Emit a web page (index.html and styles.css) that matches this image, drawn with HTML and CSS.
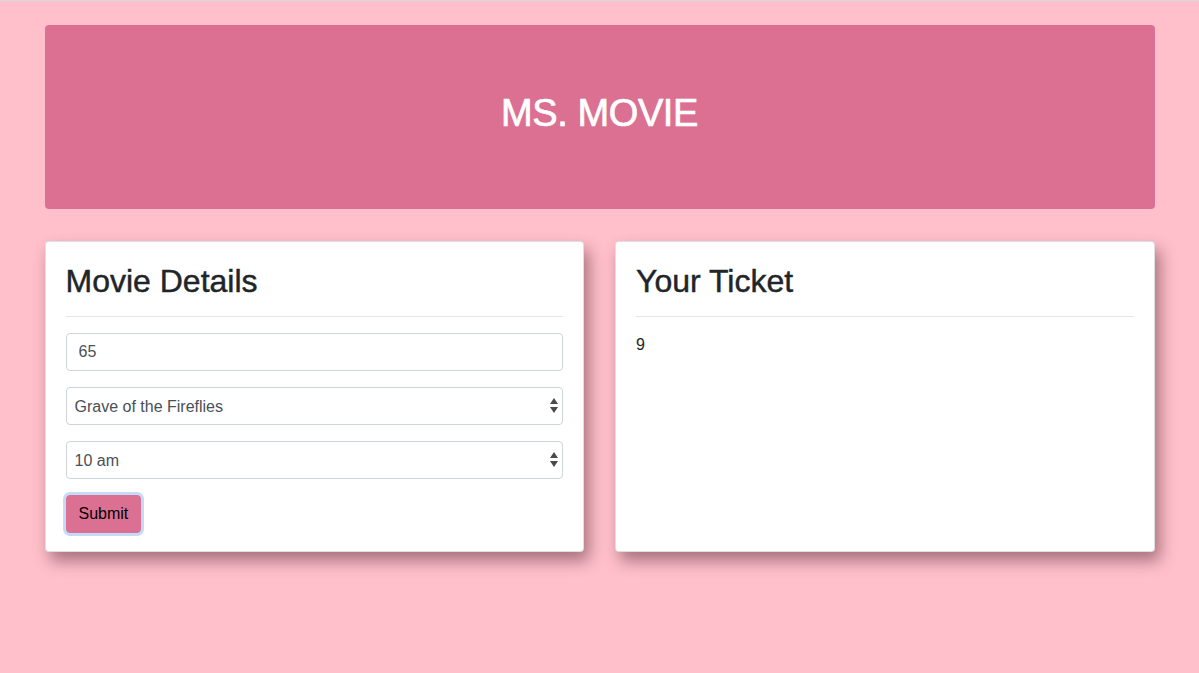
FILE: index.html
```html
<!DOCTYPE html>
<html lang="en">
<head>
<meta charset="utf-8">
<title>MS. MOVIE</title>
<link rel="stylesheet" href="styles.css">
</head>
<body>
<div class="container">
  <header class="jumbotron">
    <h1 class="title">MS. MOVIE</h1>
  </header>
  <div class="cards">
    <section class="card">
      <h2 class="card-title">Movie Details</h2>
      <hr class="divider">
      <form class="form">
        <input class="field" type="text" value="65">
        <div class="select-wrap">
          <select class="field select">
            <option>Grave of the Fireflies</option>
          </select>
          <svg class="arrows" width="8" height="15" viewBox="0 0 8 15"><path d="M4 0 L8 6 L0 6 Z M0 9 L8 9 L4 15 Z" fill="#4a4a4a"/></svg>
        </div>
        <div class="select-wrap">
          <select class="field select">
            <option>10 am</option>
          </select>
          <svg class="arrows" width="8" height="15" viewBox="0 0 8 15"><path d="M4 0 L8 6 L0 6 Z M0 9 L8 9 L4 15 Z" fill="#4a4a4a"/></svg>
        </div>
        <div><button class="btn" type="button">Submit</button></div>
      </form>
    </section>
    <section class="card">
      <h2 class="card-title">Your Ticket</h2>
      <hr class="divider">
      <p class="ticket">9</p>
    </section>
  </div>
</div>
</body>
</html>
```
FILE: styles.css
```css
* { box-sizing: border-box; }
html, body { margin: 0; }
html { background: #ffc0cb; }
body {
  background: #ffc0cb;
  border-top: 1px solid #d9d9d9;
  padding-top: 24px;
  min-height: 100vh;
  font-family: "Liberation Sans", Arial, sans-serif;
  font-size: 16px;
  color: #212529;
}
.container {
  width: 1110px;
  margin: 0 auto;
  padding-bottom: 60px;
}
.jumbotron {
  background: #db7093;
  border-radius: 4px;
  padding: 64px 32px;
  margin-bottom: 32px;
  text-align: center;
}
.title {
  margin: 0 0 8px;
  font-size: 38px;
  font-weight: 400;
  line-height: 48px;
  color: #fff;
  letter-spacing: -0.4px;
  -webkit-text-stroke: 0.7px #fff;
}
.cards {
  display: grid;
  grid-template-columns: 1fr 1fr;
  column-gap: 31px;
}
.card {
  background: #fff;
  border: 1px solid rgba(0,0,0,.125);
  border-radius: 4px;
  padding: 20px 20px 18px;
  box-shadow: 5px 9px 16px rgba(60, 20, 30, .45);
}
.card-title {
  margin: 0;
  font-size: 32px;
  font-weight: 400;
  line-height: 38px;
  color: #212529;
  -webkit-text-stroke: 0.45px #212529;
}
.divider {
  margin: 16px 0;
  border: 0;
  border-top: 1px solid rgba(0,0,0,.1);
}
.form {
  display: flex;
  flex-direction: column;
  gap: 16px;
}
.field {
  display: block;
  width: 100%;
  height: 38px;
  padding: 6px 12px;
  font-family: inherit;
  font-size: 16px;
  color: #495057;
  background: #fff;
  border: 1px solid #ced4da;
  border-radius: 4px;
  margin: 0;
}
.select-wrap { position: relative; }
.select {
  -webkit-appearance: none;
  appearance: none;
  padding: 6px 8px;
}
.arrows {
  position: absolute;
  right: 5px;
  top: 11px;
  pointer-events: none;
}
.btn {
  background: #db7093;
  color: #000;
  border: 1px solid #db7093;
  border-radius: 4px;
  font-family: inherit;
  font-size: 16px;
  line-height: 24px;
  padding: 6px 12px;
  box-shadow: 0 0 0 3px #c3dbf6;
}
.ticket {
  margin: 0;
  line-height: 24px;
  color: #212529;
}
```
